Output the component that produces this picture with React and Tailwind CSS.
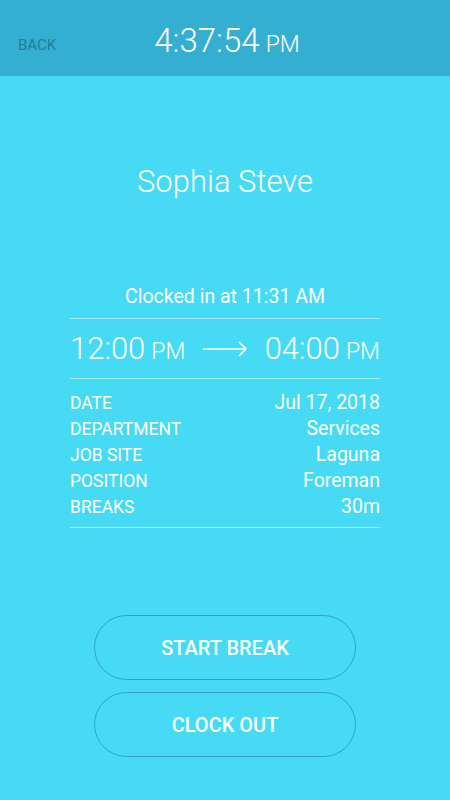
export default function App() {
  const rows = [
    ['DATE', 'Jul 17, 2018'],
    ['DEPARTMENT', 'Services'],
    ['JOB SITE', 'Laguna'],
    ['POSITION', 'Foreman'],
    ['BREAKS', '30m'],
  ]

  return (
    <div className="w-[450px] h-[800px] bg-[#46daf5] flex flex-col font-['Roboto',sans-serif] text-white">
      <div className="h-[76px] bg-[#35afd1] relative flex items-center justify-center shrink-0">
        <div className="absolute left-[18px] top-[38px] text-[15px] text-[#1f7f9c] leading-none">BACK</div>
        <div className="mt-[4px] ml-[4px] font-light leading-none">
          <span className="text-[33px]">4:37:54</span>
          <span className="text-[23px] ml-[6px]">PM</span>
        </div>
      </div>

      <div className="text-center text-[31px] font-light mt-[88px] leading-[36px]">Sophia Steve</div>

      <div className="mx-[70px] mt-[85px]">
        <div className="text-center text-[19.5px] leading-[24px] pb-[9px] border-b border-white/50">
          Clocked in at 11:31 AM
        </div>
        <div className="flex items-center justify-between h-[60px] border-b border-white/50 font-light">
          <div className="leading-none">
            <span className="text-[31px]">12:00</span>
            <span className="text-[23px] ml-[6px]">PM</span>
          </div>
          <svg width="46" height="16" viewBox="0 0 46 16" fill="none" stroke="white" strokeWidth="1.6">
            <path d="M1 8h43M37 1l7 7-7 7" />
          </svg>
          <div className="leading-none">
            <span className="text-[31px]">04:00</span>
            <span className="text-[23px] ml-[6px]">PM</span>
          </div>
        </div>
        <div className="pt-[11px] pb-[7px] border-b border-white/50">
          {rows.map(([k, v]) => (
            <div key={k} className="flex items-center justify-between h-[26px]">
              <span className="text-[17.5px]">{k}</span>
              <span className="text-[19.5px]">{v}</span>
            </div>
          ))}
        </div>
      </div>

      <div className="mt-[87px] flex flex-col items-center gap-[12px]">
        <button type="button" className="w-[262px] h-[65px] rounded-full border border-[#2fa3c4] text-[20px] font-medium">
          START BREAK
        </button>
        <button type="button" className="w-[262px] h-[65px] rounded-full border border-[#2fa3c4] text-[20px] font-medium">
          CLOCK OUT
        </button>
      </div>
    </div>
  )
}
